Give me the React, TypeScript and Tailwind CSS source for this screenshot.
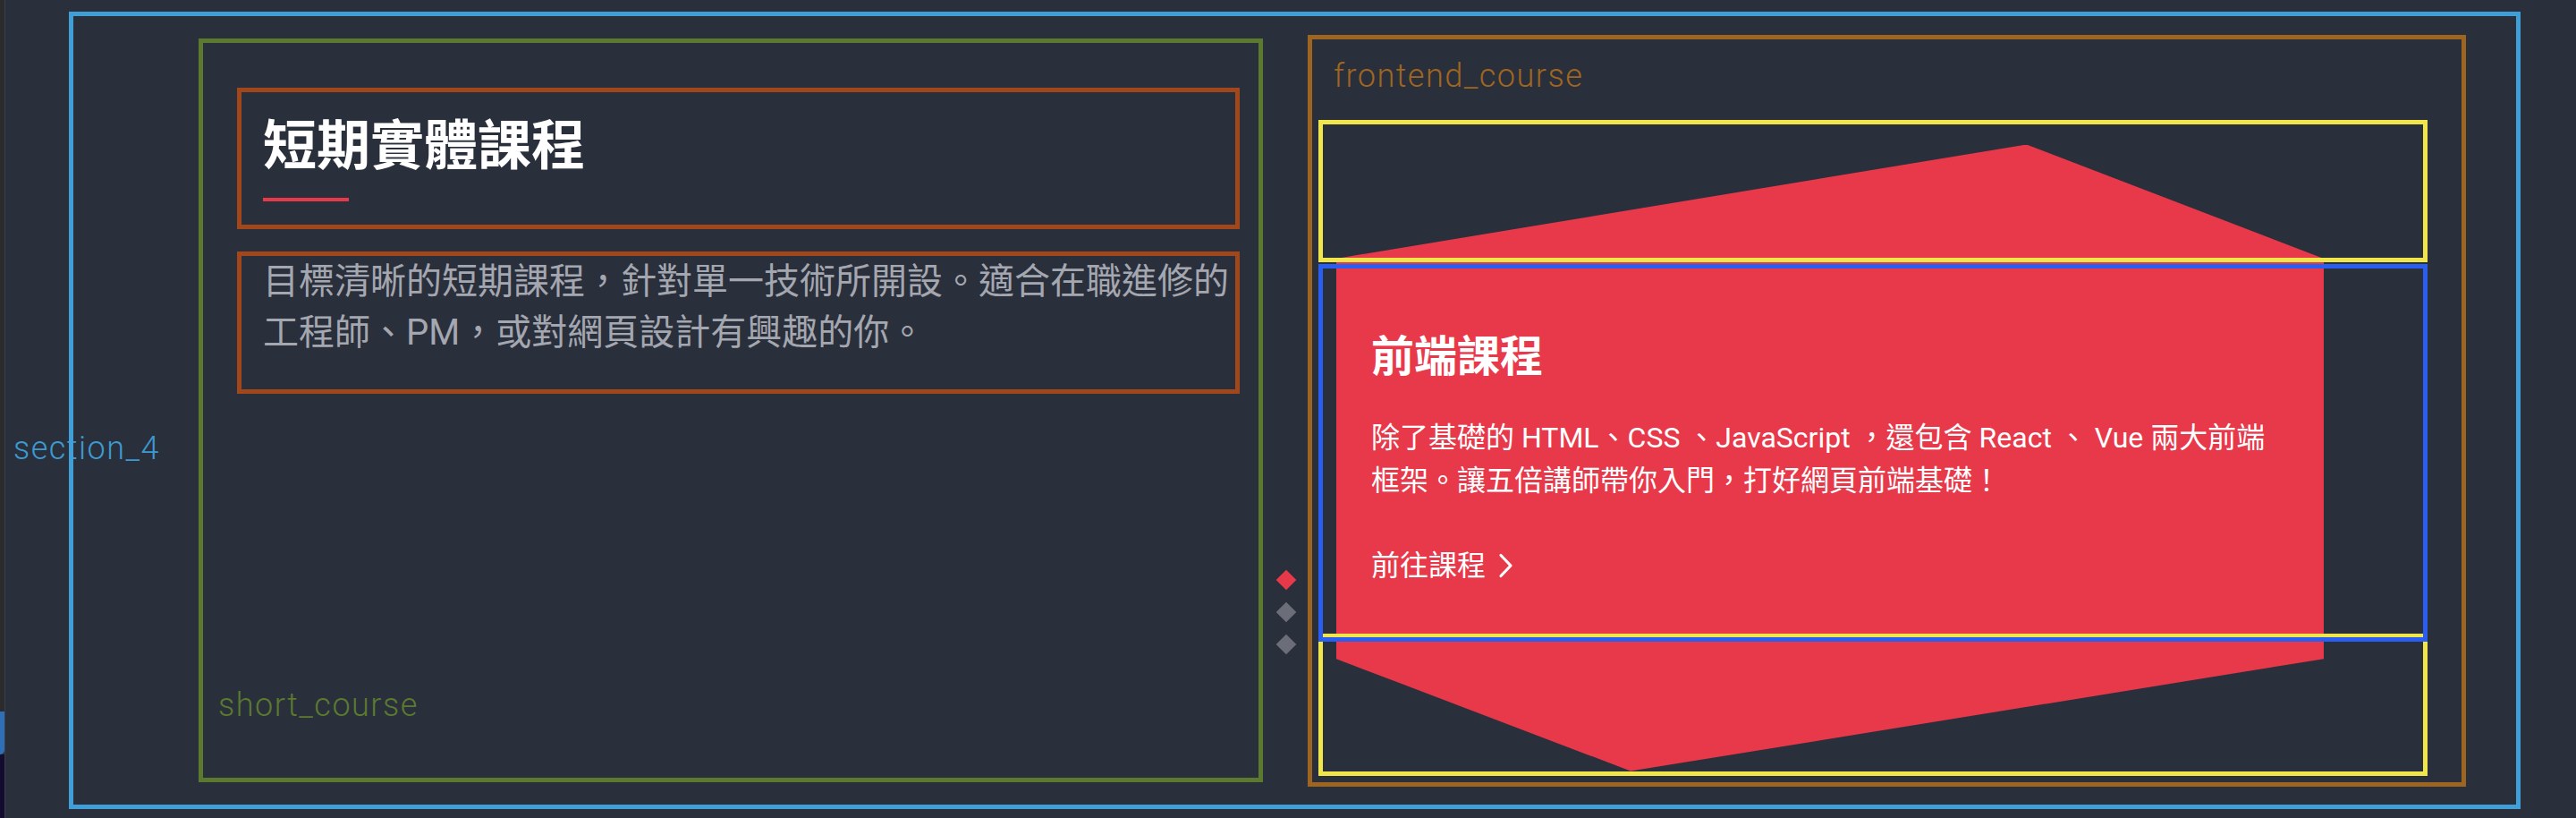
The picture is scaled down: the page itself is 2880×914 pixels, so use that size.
import React from "react";

const Diamond = ({ active }: { active?: boolean }) => (
  <div className={active ? "w-4 h-4 rotate-45 bg-[#e8394a]" : "w-4 h-4 rotate-45 bg-[#6b6e79]"} />
);

const ChevronIcon = () => (
  <svg width="18" height="28" viewBox="0 0 18 28" fill="none">
    <path d="M3 2.5 L14 14 L3 25.5" stroke="white" strokeWidth="3.2" strokeLinecap="round" strokeLinejoin="round" />
  </svg>
);

export default function App() {
  return (
    <div className="relative flex w-[2880px] h-[914px] bg-[#2a2f3c] overflow-hidden font-['Roboto','Noto_Sans_CJK_TC',sans-serif]">
      {/* editor gutter */}
      <div className="flex flex-col w-[6px] border-r border-[#3a3e48]">
        <div className="h-[795px] bg-[#2b2b2d]" />
        <div className="h-[48px] bg-[#2f6fb8] rounded-br-[6px]" />
        <div className="flex-1 bg-[#140c2e]" />
      </div>

      {/* debug label for the section */}
      <span className="absolute left-[15px] top-[481px] text-[36px] leading-[40px] tracking-[1.5px] font-light text-[#3d9ad0]">
        section_4
      </span>

      {/* section_4 */}
      <div className="relative z-10 ml-[71px] mt-[13px] w-[2741px] h-[891px] border-[5px] border-[#409fd6] flex items-center pl-[140px]">
        {/* short_course */}
        <div className="w-[1190px] h-[831px] border-[5px] border-[#5b7a2f] flex flex-col pl-[38px] pr-[21px] pt-[50px]">
          <div className="h-[158px] border-[5px] border-[#a2461c] pl-[24px] pt-[31px]">
            <h2 className="text-[60px] font-bold leading-none text-white">短期實體課程</h2>
            <div className="mt-[27px] w-[96px] h-[4px] bg-[#e8394a]" />
          </div>
          <div className="mt-[25px] h-[159px] border-[5px] border-[#a2461c] pl-[24px]">
            <p className="text-[40px] leading-[57px] text-[#a4a7af]">
              目標清晰的短期課程，針對單一技術所開設。適合在職進修的工程師、PM，或對網頁設計有興趣的你。
            </p>
          </div>
          <span className="mt-auto mb-[61px] ml-[-21px] text-[36px] leading-[40px] tracking-[1.5px] font-light text-[#5b7a2f]">
            short_course
          </span>
        </div>

        {/* slider dots */}
        <div className="self-start mt-[622px] ml-[15px] w-[22px] flex flex-col items-center gap-[20px]">
          <Diamond active />
          <Diamond />
          <Diamond />
        </div>

        {/* frontend_course */}
        <div className="ml-[13px] w-[1295px] h-[840px] border-[5px] border-[#9e6520] flex flex-col pl-[7px] pr-[38px]">
          <span className="mt-[21px] pl-[17px] text-[36px] leading-[40px] tracking-[1.5px] font-light text-[#a0661f]">
            frontend_course
          </span>
          <div className="relative mt-[29px] flex flex-col">
            {/* red card shape */}
            <div className="absolute left-[20px] top-[28px] w-[1104px] h-[700px] bg-[#e8394a] [clip-path:polygon(0_18.2%,69.9%_0,100%_18.2%,100%_82.1%,29.8%_100%,0_82.1%)]" />
            <div className="relative z-10 h-[159px] border-[5px] border-[#f0e54a]" />
            <div className="relative z-20 mt-[2px] h-[422px] border-[5px] border-[#2a5ef0] pl-[54px]">
              <div className="w-[1022px] pt-[70px] text-white">
                <h3 className="text-[48px] leading-[58px] font-bold">前端課程</h3>
                <p className="mt-[37px] text-[32px] leading-[48px]">
                  除了基礎的 HTML、CSS 、JavaScript ，還包含 React 、 Vue 兩大前端框架。讓五倍講師帶你入門，打好網頁前端基礎！
                </p>
                <a className="mt-[47px] flex items-center gap-[14px] text-[32px] leading-[48px]">
                  <span>前往課程</span>
                  <ChevronIcon />
                </a>
              </div>
            </div>
            <div className="relative z-10 mt-[-9px] h-[159px] border-[5px] border-[#f0e54a]" />
          </div>
        </div>
      </div>
    </div>
  );
}
